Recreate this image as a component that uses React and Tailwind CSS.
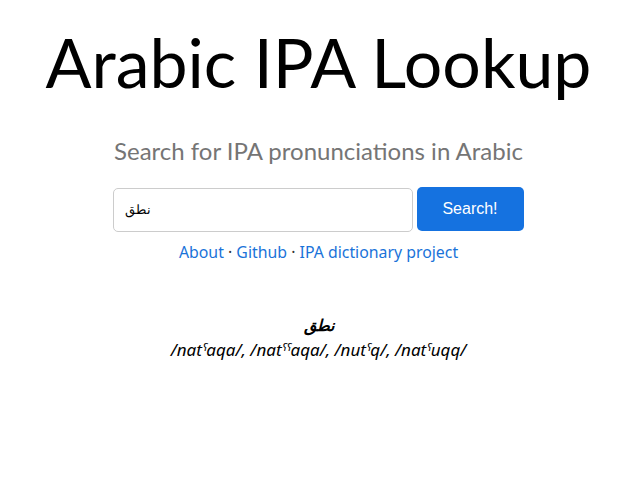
export default function App() {
  return (
    <div className="flex flex-col items-center bg-white w-full min-h-[480px] pr-[3px]">
      <h1 className="mt-[23px] text-[68px] leading-[78px] text-black" style={{ fontFamily: "Lato, sans-serif", fontWeight: 400 }}>
        Arabic IPA Lookup
      </h1>
      <p className="mt-[34px] text-[24px] leading-[32px] text-[#757575]" style={{ fontFamily: "Lato, sans-serif" }}>
        Search for IPA pronunciations in Arabic
      </p>
      <div className="mt-[21px] flex items-start gap-[4px] pr-[1px]">
        <div className="w-[300px] h-[44px] border border-[#cccccc] rounded-[5px] flex items-center px-[11px] text-[13px] text-black" style={{ fontFamily: "'Liberation Sans', 'Noto Sans', sans-serif" }}>
          نطق
        </div>
        <button className="mt-[-1px] w-[107px] h-[44px] bg-[#1572e0] rounded-[5px] text-white text-[16px]" style={{ fontFamily: "'Liberation Sans', sans-serif" }}>
          Search!
        </button>
      </div>
      <div className="mt-[9px] text-[15.85px] leading-[22px] text-[#333]" style={{ fontFamily: "'Noto Sans', sans-serif" }}>
        <a className="text-[#1a73d9]">About</a> · <a className="text-[#1a73d9]">Github</a> · <a className="text-[#1a73d9]">IPA dictionary project</a>
      </div>
      <div className="mt-[50px] flex flex-col items-center text-black italic" style={{ fontFamily: "'Noto Sans', 'DejaVu Sans', sans-serif" }}>
        <div className="text-[16px] leading-[25px] font-bold">نطق</div>
        <div className="text-[17px] leading-[23px]">/natˤaqa/, /natˤˤaqa/, /nutˤq/, /natˤuqq/</div>
      </div>
    </div>
  );
}
